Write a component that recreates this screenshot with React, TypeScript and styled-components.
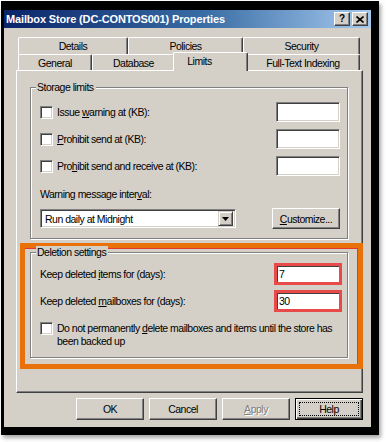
import React from "react";
import styled, { createGlobalStyle } from "styled-components";

const GlobalStyle = createGlobalStyle`
  html, body { margin: 0; padding: 0; background: #ffffff; }
  body {
    font-family: "Liberation Sans", Arial, sans-serif;
    font-size: 10.5px;
    letter-spacing: -0.5px;
    color: #000;
  }
  * { box-sizing: border-box; }
`;

const Page = styled.div`
  width: 387px;
  height: 442px;
  padding: 1px 0 0 1px;
`;

const Frame = styled.div`
  width: 378px;
  height: 434px;
  border-style: solid;
  border-color: #000;
  border-width: 9px 8px 8px 3px;
  box-shadow: 2px 3px 4px rgba(0, 0, 0, 0.35);
`;

const Dialog = styled.div`
  width: 100%;
  height: 100%;
  background: #d4d0c8;
  display: flex;
  flex-direction: column;
`;

const TitleBar = styled.div`
  height: 18px;
  flex: none;
  display: flex;
  align-items: center;
  padding: 0 3px 0 2px;
  background: linear-gradient(to right, #0a246a 0%, #3a6ea5 55%, #a6caf0 100%);
`;

const TitleText = styled.span`
  flex: 1;
  color: #fff;
  font-family: "Liberation Sans", Arial, sans-serif;
  font-weight: bold;
  font-size: 11px;
  letter-spacing: -0.15px;
  white-space: nowrap;
`;

const CaptionButton = styled.div`
  width: 16px;
  height: 14px;
  margin-left: 2px;
  background: #d4d0c8;
  border: 1px solid;
  border-color: #fff #404040 #404040 #fff;
  box-shadow: inset -1px -1px #808080;
  display: flex;
  align-items: center;
  justify-content: center;
  font-family: "Liberation Sans", Arial, sans-serif;
  font-weight: bold;
  font-size: 10px;
  letter-spacing: 0;
  line-height: 1;
`;

const Body = styled.div`
  flex: 1;
  display: flex;
  flex-direction: column;
  padding: 9px 8px 7px 12px;
`;

const TabStrip = styled.div`
  display: flex;
  flex-direction: column;
  padding: 0 3px 0 2px;
`;

const TabRow = styled.div<{ $h: number }>`
  display: flex;
  height: ${(p) => p.$h}px;
`;

const Tab = styled.div<{ $w: number; $active?: boolean }>`
  width: ${(p) => p.$w}px;
  flex: none;
  height: ${(p) => (p.$active ? "19px" : "100%")};
  margin: ${(p) => (p.$active ? "-2px -2px -1px -2px" : "0")};
  padding-right: ${(p) => (p.$active ? "22px" : "0")};
  padding-bottom: ${(p) => (p.$active ? "3px" : "0")};
  position: relative;
  z-index: ${(p) => (p.$active ? 2 : 0)};
  background: #d4d0c8;
  border-top: 1px solid #fff;
  border-left: 1px solid #fff;
  border-right: 1px solid #404040;
  border-radius: 2px 2px 0 0;
  box-shadow: inset -1px 0 #808080;
  display: flex;
  align-items: center;
  justify-content: center;
  white-space: nowrap;
`;

const Panel = styled.div`
  height: 323px;
  flex: none;
  border: 1px solid;
  border-color: #fff #404040 #404040 #fff;
  box-shadow: inset -1px -1px #808080;
  padding: 16px 14px 0 13px;
  display: flex;
  flex-direction: column;
`;

const GroupBox = styled.div<{ $pt: number; $pb: number; $pr: number }>`
  position: relative;
  border: 1px solid #808080;
  box-shadow: inset 1px 1px #fff, 1px 1px #fff;
  padding: ${(p) => p.$pt}px ${(p) => p.$pr}px ${(p) => p.$pb}px 9px;
  display: flex;
  flex-direction: column;
`;

const GroupLabel = styled.span`
  position: absolute;
  top: -7px;
  left: 5px;
  padding: 0 2px 0 1px;
  line-height: 13px;
  background: #d4d0c8;
  white-space: nowrap;
`;

const FieldRow = styled.div<{ $mt?: number }>`
  display: flex;
  align-items: center;
  justify-content: space-between;
  margin-top: ${(p) => p.$mt ?? 0}px;
`;

const CheckLabel = styled.label<{ $top?: boolean }>`
  display: flex;
  align-items: ${(p) => (p.$top ? "flex-start" : "center")};
  gap: 4px;
  line-height: 13px;
`;

const CheckBox = styled.span`
  width: 13px;
  height: 13px;
  flex: none;
  background: #fff;
  border: 1px solid;
  border-color: #808080 #fff #fff #808080;
  box-shadow: inset 1px 1px #404040, inset -1px -1px #d4d0c8;
`;

const WrapText = styled.span`
  flex: 1;
  padding-right: 5px;
`;

const TextBox = styled.div<{ $hl?: boolean }>`
  width: ${(p) => (p.$hl ? 68 : 64)}px;
  height: ${(p) => (p.$hl ? 22 : 20)}px;
  background: #fff;
  border: ${(p) => (p.$hl ? "3px solid #e84a4a" : "1px solid")};
  border-color: ${(p) => (p.$hl ? "#e84a4a" : "#808080 #fff #fff #808080")};
  box-shadow: ${(p) =>
    p.$hl ? "inset 1px 1px #404040" : "inset 1px 1px #404040, inset -1px -1px #d4d0c8"};
  padding: 0 0 0 2px;
  display: flex;
  align-items: center;
  line-height: 13px;
`;

const Caption = styled.div<{ $mt: number }>`
  margin-top: ${(p) => p.$mt}px;
  line-height: 13px;
`;

const Select = styled.div`
  width: 196px;
  height: 19px;
  background: #fff;
  border: 1px solid;
  border-color: #808080 #fff #fff #808080;
  box-shadow: inset 1px 1px #404040, inset -1px -1px #d4d0c8;
  display: flex;
  align-items: center;
  padding: 1px 2px 1px 4px;
`;

const SelectText = styled.span`
  flex: 1;
`;

const ArrowButton = styled.span`
  width: 15px;
  height: 15px;
  background: #d4d0c8;
  border: 1px solid;
  border-color: #d4d0c8 #404040 #404040 #d4d0c8;
  box-shadow: inset 1px 1px #fff, inset -1px -1px #808080;
  display: flex;
  align-items: center;
  justify-content: center;
`;

const Button = styled.div<{ $disabled?: boolean; $default?: boolean; $h?: number }>`
  width: 68px;
  height: ${(p) => p.$h ?? 22}px;
  background: #d4d0c8;
  border: 1px solid;
  border-color: ${(p) => (p.$default ? "#000" : "#fff #404040 #404040 #fff")};
  box-shadow: ${(p) =>
    p.$default
      ? "inset 1px 1px #fff, inset -1px -1px #404040, inset -2px -2px #808080"
      : "inset -1px -1px #808080"};
  display: flex;
  align-items: stretch;
  justify-content: center;
  padding: ${(p) => (p.$default ? "3px" : "0")};
  color: ${(p) => (p.$disabled ? "#808080" : "#000")};
  text-shadow: ${(p) => (p.$disabled ? "1px 1px #fff" : "none")};
`;

const ButtonFace = styled.span<{ $focus?: boolean }>`
  flex: 1;
  display: flex;
  align-items: center;
  justify-content: center;
  border: ${(p) => (p.$focus ? "1px dotted #000" : "none")};
`;

const Highlight = styled.div`
  margin: 4px -15px 0 -10px;
  border: 5px solid #e8710a;
  box-shadow: inset -1px 1px 0 #e23b2e;
  padding: 4px 10px 6px 5px;
`;

const ButtonRow = styled.div`
  display: flex;
  justify-content: flex-end;
  gap: 5px;
  margin-top: 5px;
`;

const Key = styled.u`
  text-decoration: underline;
`;

const CloseIcon = () => (
  <svg width="8" height="7" viewBox="0 0 8 7">
    <path d="M0.5 0.5 L7.5 6.5 M7.5 0.5 L0.5 6.5" stroke="#000" strokeWidth="1.6" />
  </svg>
);

const DownArrow = () => (
  <svg width="7" height="4" viewBox="0 0 7 4">
    <path d="M0 0 H7 L3.5 4 Z" fill="#000" />
  </svg>
);

export default function App() {
  return (
    <>
      <GlobalStyle />
      <Page>
        <Frame>
          <Dialog>
            <TitleBar>
              <TitleText>Mailbox Store (DC-CONTOS001) Properties</TitleText>
              <CaptionButton>?</CaptionButton>
              <CaptionButton>
                <CloseIcon />
              </CaptionButton>
            </TitleBar>
            <Body>
              <TabStrip>
                <TabRow $h={17}>
                  <Tab $w={110}>Details</Tab>
                  <Tab $w={115}>Policies</Tab>
                  <Tab $w={117}>Security</Tab>
                </TabRow>
                <TabRow $h={16}>
                  <Tab $w={74}>General</Tab>
                  <Tab $w={83}>Database</Tab>
                  <Tab $w={75} $active>
                    Limits
                  </Tab>
                  <Tab $w={114}>Full-Text Indexing</Tab>
                </TabRow>
              </TabStrip>
              <Panel>
                <GroupBox $pt={14} $pb={9} $pr={7}>
                  <GroupLabel>Storage limits</GroupLabel>
                  <FieldRow>
                    <CheckLabel>
                      <CheckBox />
                      <span>
                        Issue <Key>w</Key>arning at (KB):
                      </span>
                    </CheckLabel>
                    <TextBox />
                  </FieldRow>
                  <FieldRow $mt={7}>
                    <CheckLabel>
                      <CheckBox />
                      <span>
                        <Key>P</Key>rohibit send at (KB):
                      </span>
                    </CheckLabel>
                    <TextBox />
                  </FieldRow>
                  <FieldRow $mt={7}>
                    <CheckLabel>
                      <CheckBox />
                      <span>
                        Pro<Key>h</Key>ibit send and receive at (KB):
                      </span>
                    </CheckLabel>
                    <TextBox />
                  </FieldRow>
                  <Caption $mt={12}>
                    Warning message inter<Key>v</Key>al:
                  </Caption>
                  <FieldRow $mt={7}>
                    <Select>
                      <SelectText>Run daily at Midnight</SelectText>
                      <ArrowButton>
                        <DownArrow />
                      </ArrowButton>
                    </Select>
                    <Button $h={21}>
                      <ButtonFace>
                        <span>
                          <Key>C</Key>ustomize...
                        </span>
                      </ButtonFace>
                    </Button>
                  </FieldRow>
                </GroupBox>
                <Highlight>
                  <GroupBox $pt={10} $pb={9} $pr={5}>
                    <GroupLabel>Deletion settings</GroupLabel>
                    <FieldRow>
                      <span>
                        Keep deleted <Key>i</Key>tems for (days):
                      </span>
                      <TextBox $hl>7</TextBox>
                    </FieldRow>
                    <FieldRow $mt={5}>
                      <span>
                        Keep deleted <Key>m</Key>ailboxes for (days):
                      </span>
                      <TextBox $hl>30</TextBox>
                    </FieldRow>
                    <FieldRow $mt={10}>
                      <CheckLabel $top>
                        <CheckBox />
                        <WrapText>
                          Do not permanently <Key>d</Key>elete mailboxes and items until the
                          store has been backed up
                        </WrapText>
                      </CheckLabel>
                    </FieldRow>
                  </GroupBox>
                </Highlight>
              </Panel>
              <ButtonRow>
                <Button>
                  <ButtonFace>OK</ButtonFace>
                </Button>
                <Button>
                  <ButtonFace>Cancel</ButtonFace>
                </Button>
                <Button $disabled>
                  <ButtonFace>
                    <span>
                      <Key>A</Key>pply
                    </span>
                  </ButtonFace>
                </Button>
                <Button $default>
                  <ButtonFace $focus>Help</ButtonFace>
                </Button>
              </ButtonRow>
            </Body>
          </Dialog>
        </Frame>
      </Page>
    </>
  );
}
